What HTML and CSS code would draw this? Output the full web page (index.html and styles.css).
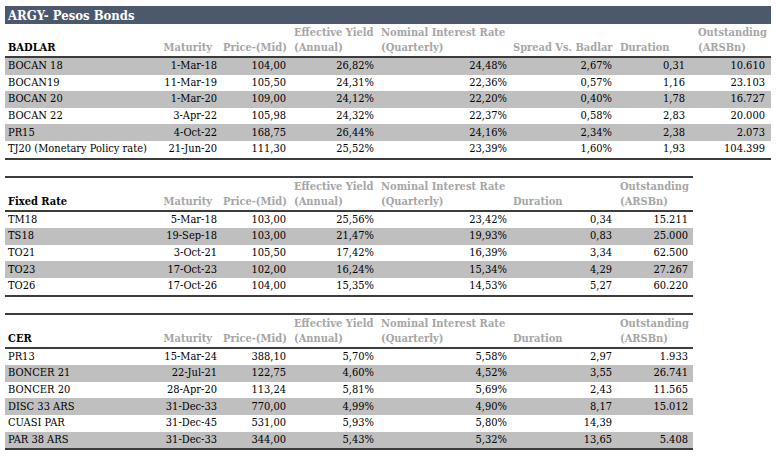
FILE: index.html
```html
<!DOCTYPE html>
<html>
<head>
<meta charset="utf-8">
<link rel="stylesheet" href="styles.css">
</head>
<body>
<div class="page">
  <div class="title">ARGY- Pesos Bonds</div>

  <table class="bonds wide">
    <colgroup>
      <col class="c-name"><col class="c-mat"><col class="c-price"><col class="c-eff"><col class="c-nom"><col class="c-spread"><col class="c-dur1"><col class="c-out1">
    </colgroup>
    <thead>
      <tr class="h1"><th></th><th></th><th></th><th class="l eff">Effective Yield</th><th class="l nom">Nominal Interest Rate</th><th></th><th></th><th class="l out1">Outstanding</th></tr>
      <tr class="h2"><th class="l sect">BADLAR</th><th class="mat">Maturity</th><th class="l price">Price-(Mid)</th><th class="l eff">(Annual)</th><th class="l nom">(Quarterly)</th><th class="l spread">Spread Vs. Badlar</th><th class="l dur1">Duration</th><th class="l out1">(ARSBn)</th></tr>
    </thead>
    <tbody>
      <tr class="g"><td>BOCAN 18</td><td>1-Mar-18</td><td>104,00</td><td>26,82%</td><td>24,48%</td><td>2,67%</td><td class="d1">0,31</td><td>10.610</td></tr>
      <tr><td>BOCAN19</td><td>11-Mar-19</td><td>105,50</td><td>24,31%</td><td>22,36%</td><td>0,57%</td><td class="d1">1,16</td><td>23.103</td></tr>
      <tr class="g"><td>BOCAN 20</td><td>1-Mar-20</td><td>109,00</td><td>24,12%</td><td>22,20%</td><td>0,40%</td><td class="d1">1,78</td><td>16.727</td></tr>
      <tr><td>BOCAN 22</td><td>3-Apr-22</td><td>105,98</td><td>24,32%</td><td>22,37%</td><td>0,58%</td><td class="d1">2,83</td><td>20.000</td></tr>
      <tr class="g"><td>PR15</td><td>4-Oct-22</td><td>168,75</td><td>26,44%</td><td>24,16%</td><td>2,34%</td><td class="d1">2,38</td><td>2.073</td></tr>
      <tr><td>TJ20 (Monetary Policy rate)</td><td>21-Jun-20</td><td>111,30</td><td>25,52%</td><td>23,39%</td><td>1,60%</td><td class="d1">1,93</td><td>104.399</td></tr>
    </tbody>
  </table>

  <table class="bonds narrow ruled">
    <colgroup>
      <col class="c-name"><col class="c-mat"><col class="c-price"><col class="c-eff"><col class="c-nom"><col class="c-dur2"><col class="c-out2">
    </colgroup>
    <thead>
      <tr class="h1"><th></th><th></th><th></th><th class="l eff">Effective Yield</th><th class="l nom">Nominal Interest Rate</th><th></th><th class="l out2">Outstanding</th></tr>
      <tr class="h2"><th class="l sect">Fixed Rate</th><th class="mat">Maturity</th><th class="l price">Price-(Mid)</th><th class="l eff">(Annual)</th><th class="l nom">(Quarterly)</th><th class="l dur2">Duration</th><th class="l out2">(ARSBn)</th></tr>
    </thead>
    <tbody>
      <tr><td>TM18</td><td>5-Mar-18</td><td>103,00</td><td>25,56%</td><td>23,42%</td><td>0,34</td><td>15.211</td></tr>
      <tr class="g"><td>TS18</td><td>19-Sep-18</td><td>103,00</td><td>21,47%</td><td>19,93%</td><td>0,83</td><td>25.000</td></tr>
      <tr><td>TO21</td><td>3-Oct-21</td><td>105,50</td><td>17,42%</td><td>16,39%</td><td>3,34</td><td>62.500</td></tr>
      <tr class="g"><td>TO23</td><td>17-Oct-23</td><td>102,00</td><td>16,24%</td><td>15,34%</td><td>4,29</td><td>27.267</td></tr>
      <tr><td>TO26</td><td>17-Oct-26</td><td>104,00</td><td>15,35%</td><td>14,53%</td><td>5,27</td><td>60.220</td></tr>
    </tbody>
  </table>

  <table class="bonds narrow ruled">
    <colgroup>
      <col class="c-name"><col class="c-mat"><col class="c-price"><col class="c-eff"><col class="c-nom"><col class="c-dur2"><col class="c-out2">
    </colgroup>
    <thead>
      <tr class="h1"><th></th><th></th><th></th><th class="l eff">Effective Yield</th><th class="l nom">Nominal Interest Rate</th><th></th><th class="l out2">Outstanding</th></tr>
      <tr class="h2"><th class="l sect">CER</th><th class="mat">Maturity</th><th class="l price">Price-(Mid)</th><th class="l eff">(Annual)</th><th class="l nom">(Quarterly)</th><th class="l dur2">Duration</th><th class="l out2">(ARSBn)</th></tr>
    </thead>
    <tbody>
      <tr><td>PR13</td><td>15-Mar-24</td><td>388,10</td><td>5,70%</td><td>5,58%</td><td>2,97</td><td>1.933</td></tr>
      <tr class="g"><td>BONCER 21</td><td>22-Jul-21</td><td>122,75</td><td>4,60%</td><td>4,52%</td><td>3,55</td><td>26.741</td></tr>
      <tr><td>BONCER 20</td><td>28-Apr-20</td><td>113,24</td><td>5,81%</td><td>5,69%</td><td>2,43</td><td>11.565</td></tr>
      <tr class="g"><td>DISC 33 ARS</td><td>31-Dec-33</td><td>770,00</td><td>4,99%</td><td>4,90%</td><td>8,17</td><td>15.012</td></tr>
      <tr><td>CUASI PAR</td><td>31-Dec-45</td><td>531,00</td><td>5,93%</td><td>5,80%</td><td>14,39</td><td></td></tr>
      <tr class="g"><td>PAR 38 ARS</td><td>31-Dec-33</td><td>344,00</td><td>5,43%</td><td>5,32%</td><td>13,65</td><td>5.408</td></tr>
    </tbody>
  </table>
</div>
</body>
</html>
```

FILE: styles.css
```css
html, body {
  margin: 0;
  padding: 0;
  background: #ffffff;
}

.page {
  padding: 6px 0 0 5px;
  font-family: "DejaVu Serif Condensed", "DejaVu Serif", "Liberation Serif", serif;
  font-stretch: condensed;
  font-size: 11px;
  color: #000000;
}

.title {
  width: 766px;
  height: 18px;
  line-height: 19px;
  background: #4c586b;
  color: #ffffff;
  font-weight: bold;
  font-size: 13px;
  padding-left: 3px;
  box-sizing: border-box;
}

.bonds {
  border-collapse: collapse;
  table-layout: fixed;
}

.wide { width: 766px; }
.narrow { width: 688px; margin-top: 16px; }

.ruled { border-top: 2px solid #3c3c3c; }

.c-name { width: 153px; }
.c-mat { width: 63px; }
.c-price { width: 69px; }
.c-eff { width: 88px; }
.c-nom { width: 133px; }
.c-spread { width: 105px; }
.c-dur1 { width: 73px; }
.c-out1 { width: 82px; }
.c-dur2 { width: 105px; }
.c-out2 { width: 77px; }

th {
  font-weight: bold;
  color: #a6a6a6;
  white-space: nowrap;
  overflow: visible;
  padding: 0;
  height: 15px;
  line-height: 15px;
  text-align: right;
  vertical-align: bottom;
}

.h1 th { padding-top: 1px; }
.h2 th { padding-bottom: 1px; }

th.l { text-align: left; }
th.sect { color: #000000; padding-left: 3px; }
th.mat { padding-right: 9px; }
th.price { padding-left: 2px; }
th.eff { padding-left: 4px; }
th.nom { padding-left: 3px; }
th.spread { padding-left: 2px; }
th.dur1 { padding-left: 4px; }
th.out1 { padding-left: 9px; }
th.dur2 { padding-left: 2px; }
th.out2 { padding-left: 4px; }

thead .h2 { border-bottom: 2px solid #3c3c3c; }
tbody tr:last-child { border-bottom: 2px solid #3c3c3c; }

td {
  height: 16.6px;
  line-height: 16px;
  padding: 0 4px 0 0;
  text-align: right;
  white-space: nowrap;
  overflow: visible;
}

td:first-child {
  text-align: left;
  padding-left: 3px;
}

td.d1 { padding-right: 4px; }
.narrow td:last-child { padding-right: 5px; }
.wide td:last-child { padding-right: 6px; }

tr.g td { background: #bfbfbf; }
```
